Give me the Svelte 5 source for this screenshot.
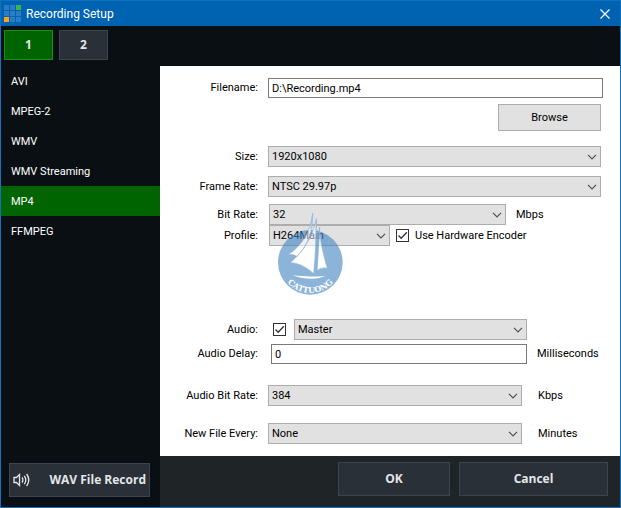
<script lang="ts">
	const formats = ['AVI', 'MPEG-2', 'WMV', 'WMV Streaming', 'MP4', 'FFMPEG'];
	const tabs = [1, 2];
	const cells = [0, 1, 2, 3, 4, 5, 6, 7, 8];

	// watermark sails, back to front
	const sails = [
		'M128 25C122 78 96 124 54 149C66 148 76 150 82 155C112 122 130 76 128 25Z',
		'M139 44C128 92 102 138 61 173C88 174 112 188 131 206C136 154 141 96 139 44Z',
		'M148 70C147 110 144 154 141 197C150 189 160 187 172 190C162 156 151 116 148 70Z'
	];

	let tab = $state(1);
	let format = $state('MP4');
	let filename = $state('D:\\Recording.mp4');
	let delay = $state('0');
	let hardware = $state(true);
	let audio = $state(true);
</script>

{#snippet dropdown(id: string, options: string[])}
	<span class="select">
		<select {id}>
			{#each options as option (option)}
				<option>{option}</option>
			{/each}
		</select>
		<svg class="chevron" viewBox="0 0 10 6" aria-hidden="true"><path d="M1 0.8 5 4.8 9 0.8" /></svg>
	</span>
{/snippet}

{#snippet tick()}
	<svg class="tick" viewBox="0 0 13 13" aria-hidden="true"><path d="M2.5 6.5 5.2 9.3 10.8 3.3" /></svg>
{/snippet}

<div class="window">
	<header class="titlebar">
		<svg class="app-icon" viewBox="0 0 17 17" aria-hidden="true">
			{#each cells as c (c)}
				<rect
					class:green={c === 2}
					class:orange={c === 6}
					x={(c % 3) * 6}
					y={Math.floor(c / 3) * 6}
					width="5"
					height="5"
				/>
			{/each}
		</svg>
		<h1>Recording Setup</h1>
		<button class="close" aria-label="Close">
			<svg viewBox="0 0 10 10"><path d="M0.5 0.5 9.5 9.5M9.5 0.5 0.5 9.5" /></svg>
		</button>
	</header>

	<nav class="tabs">
		{#each tabs as t (t)}
			<button class="dark" class:active={tab === t} onclick={() => (tab = t)}>{t}</button>
		{/each}
	</nav>

	<div class="body">
		<aside>
			<ul>
				{#each formats as f (f)}
					<li>
						<button class:active={format === f} onclick={() => (format = f)}>{f}</button>
					</li>
				{/each}
			</ul>
			<button class="dark wav">
				<svg viewBox="0 0 18 16" aria-hidden="true">
					<path d="M1 5.5H3.5L6.5 2.5V13.5L3.5 10.5H1Z" />
					<path d="M9 5.5Q10.8 8 9 10.5M11.3 3.8Q14.3 8 11.3 12.2M13.6 2Q18 8 13.6 14" />
				</svg>
				<span>WAV File Record</span>
			</button>
		</aside>

		<main>
			<form>
				<div class="row file">
					<label for="filename">Filename:</label>
					<input id="filename" type="text" bind:value={filename} />
				</div>
				<div class="row browse">
					<button type="button">Browse</button>
				</div>
				<div class="row wide">
					<label for="size">Size:</label>
					{@render dropdown('size', ['1920x1080', '1280x720'])}
				</div>
				<div class="row wide rate">
					<label for="rate">Frame Rate:</label>
					{@render dropdown('rate', ['NTSC 29.97p', 'PAL 25p'])}
				</div>
				<div class="row bitrate">
					<label for="bitrate">Bit Rate:</label>
					{@render dropdown('bitrate', ['32', '16', '8'])}
					<span class="unit">Mbps</span>
				</div>
				<div class="row profile">
					<label for="profile">Profile:</label>
					{@render dropdown('profile', ['H264Main', 'H264High'])}
					<span class="check">
						<input id="hardware" type="checkbox" bind:checked={hardware} />
						{@render tick()}
					</span>
					<label class="after" for="hardware">Use Hardware Encoder</label>
				</div>
				<div class="row audio">
					<label for="audio">Audio:</label>
					<span class="check">
						<input id="audio" type="checkbox" bind:checked={audio} />
						{@render tick()}
					</span>
					{@render dropdown('source', ['Master', 'A', 'B'])}
				</div>
				<div class="row delay">
					<label for="delay">Audio Delay:</label>
					<input id="delay" type="text" bind:value={delay} />
					<span class="unit">Milliseconds</span>
				</div>
				<div class="row narrow">
					<label for="audiorate">Audio Bit Rate:</label>
					{@render dropdown('audiorate', ['384', '256', '128'])}
					<span class="unit">Kbps</span>
				</div>
				<div class="row narrow last">
					<label for="newfile">New File Every:</label>
					{@render dropdown('newfile', ['None', '10', '30'])}
					<span class="unit">Minutes</span>
				</div>

				<svg class="watermark" viewBox="0 0 240 285" aria-hidden="true">
					<defs>
						<path id="rim" d="M29 172A92 92 0 0 0 213 172" />
						<mask id="cut" maskUnits="userSpaceOnUse" x="0" y="0" width="240" height="285">
							<rect width="240" height="285" fill="#fff" />
							{#each sails as d (d)}
								<path {d} fill="#000" />
							{/each}
						</mask>
					</defs>
					<circle cx="121" cy="172" r="97" mask="url(#cut)" />
					{#each sails as d (d)}
						<path class="sail" {d} />
					{/each}
					<path class="mast" d="M139 40 134 214M149 66 139 212M128 25 122 70" />
					<path d="M68 211C96 215 134 216 165 212C154 219 136 222 119 221C98 220 80 217 68 211Z" />
					<text><textPath href="#rim" startOffset="50%">CATTUONG</textPath></text>
				</svg>
			</form>

			<footer>
				<button class="dark ok">OK</button>
				<button class="dark cancel">Cancel</button>
			</footer>
		</main>
	</div>
</div>

<style>
	:global(body) {
		margin: 0;
	}
	.window {
		display: flex;
		flex-direction: column;
		box-sizing: border-box;
		min-height: 100vh;
		border: 1px solid #1170bf;
		background: #0a0f13;
		color: #fff;
		font: 11px/18px Roboto, 'Liberation Sans', sans-serif;
	}
	button,
	input,
	select {
		box-sizing: border-box;
		margin: 0;
		font: inherit;
		border-radius: 0;
	}

	.titlebar {
		display: flex;
		align-items: center;
		height: 25px;
		padding: 0 10px 0 3px;
		background: #0063b1;
	}
	.app-icon {
		width: 17px;
		height: 17px;
		fill: #2a7cc4;
	}
	.green {
		fill: #3cb54a;
	}
	.orange {
		fill: #faa41a;
	}
	h1 {
		flex: 1;
		margin: 0 0 0 5px;
		font-size: 12px;
		font-weight: 400;
	}
	.close {
		display: flex;
		padding: 0;
		border: 0;
		background: none;
	}
	.close svg {
		width: 10px;
		height: 10px;
		stroke: #fff;
		stroke-width: 1.2;
	}

	.tabs {
		display: flex;
		gap: 6px;
		padding: 4px 3px 6px;
	}
	.dark {
		border: 1px solid #3c4450;
		background: #2a3038;
		color: #e4e6e8;
		font: 700 12px/18px 'Open Sans', sans-serif;
	}
	.tabs .dark {
		width: 49px;
		height: 30px;
		padding: 0;
	}
	.tabs .active {
		border-color: #1c8c1c;
		background: #006400;
	}

	.body {
		display: flex;
		flex: 1;
	}
	aside {
		display: flex;
		flex-direction: column;
		justify-content: space-between;
		width: 159px;
	}
	ul {
		margin: 0;
		padding: 0;
		list-style: none;
	}
	li button {
		display: block;
		width: 100%;
		height: 30px;
		padding: 1px 10px 0;
		border: 0;
		background: none;
		color: #fff;
		text-align: left;
	}
	li .active {
		background: #006400;
	}
	.wav {
		display: flex;
		align-items: center;
		justify-content: space-between;
		height: 34px;
		margin: 0 10px 10px 8px;
		padding: 0 3px;
	}
	.wav svg {
		width: 18px;
		height: 16px;
		fill: none;
		stroke: #e4e6e8;
		stroke-width: 1.3;
	}

	main {
		display: flex;
		flex: 1;
		flex-direction: column;
	}
	form {
		position: relative;
		flex: 1;
		padding: 12px 0;
		background: #fff;
		color: #000;
	}
	.row {
		display: flex;
		align-items: center;
	}
	.row label {
		flex: none;
		width: 98px;
		margin-right: 10px;
		text-align: right;
	}
	.file {
		padding-right: 17px;
	}
	.browse {
		justify-content: flex-end;
		margin: 6px 0 15px;
		padding-right: 19px;
	}
	.browse button {
		width: 103px;
		height: 27px;
		border: 1px solid #adadad;
		background: #e1e1e1;
		color: #000;
	}
	.wide {
		padding-right: 19px;
	}
	.rate {
		margin: 9px 0 7px;
	}
	.bitrate label,
	.profile label {
		margin-right: 11px;
	}
	.audio {
		margin: 73px 0 4px;
		padding-right: 93px;
	}
	.audio label {
		margin-right: 15px;
	}
	.audio .check {
		margin-right: 8px;
	}
	.delay {
		margin-bottom: 21px;
	}
	.delay label {
		margin-right: 13px;
	}
	.last {
		margin-top: 17px;
	}
	.unit {
		flex: none;
		box-sizing: border-box;
		width: 114px;
		padding-left: 10px;
	}
	.delay .unit {
		width: 93px;
	}
	.narrow .unit {
		width: 98px;
		padding-left: 16px;
	}
	.row .after {
		width: 205px;
		margin: 0;
		text-align: left;
	}

	.row input[type='text'] {
		flex: 1;
		min-width: 0;
		height: 20px;
		padding: 0 3px;
		border: 1px solid #7a7a7a;
		background: #fff;
		color: #000;
	}
	.select {
		position: relative;
		flex: 1;
		min-width: 0;
	}
	select {
		display: block;
		width: 100%;
		height: 21px;
		padding: 0 18px 0 3px;
		border: 1px solid #adadad;
		background: #e1e1e1;
		color: #000;
		appearance: none;
	}
	.chevron {
		position: absolute;
		top: 8px;
		right: 4px;
		width: 10px;
		height: 6px;
		fill: none;
		stroke: #505050;
		stroke-width: 1.2;
		pointer-events: none;
	}
	.check {
		position: relative;
		flex: none;
		width: 13px;
		height: 13px;
	}
	.profile .check {
		margin: 0 6px;
	}
	.check input {
		display: block;
		width: 13px;
		height: 13px;
		border: 1px solid #333;
		background: #fff;
		appearance: none;
	}
	.tick {
		position: absolute;
		inset: 0;
		fill: none;
		stroke: #333;
		stroke-width: 1.3;
		pointer-events: none;
	}
	.check input:not(:checked) + .tick {
		display: none;
	}

	.watermark {
		position: absolute;
		top: 139px;
		left: 110px;
		width: 80px;
		height: 95px;
		fill: #fff;
		pointer-events: none;
	}
	.watermark circle {
		fill: #4686c0;
		fill-opacity: 0.62;
	}
	.sail {
		fill-opacity: 0.5;
		stroke: #8db4d8;
		stroke-width: 2;
	}
	.mast {
		fill: none;
		stroke: #8db4d8;
		stroke-width: 2;
	}
	.watermark text {
		font: 700 24px 'DejaVu Serif', serif;
		text-anchor: middle;
	}

	footer {
		display: flex;
		justify-content: flex-end;
		gap: 9px;
		padding: 6px 12px 11px;
		background: #1f2427;
	}
	footer .dark {
		height: 34px;
		padding: 0;
	}
	.ok {
		width: 112px;
	}
	.cancel {
		width: 149px;
	}
</style>
